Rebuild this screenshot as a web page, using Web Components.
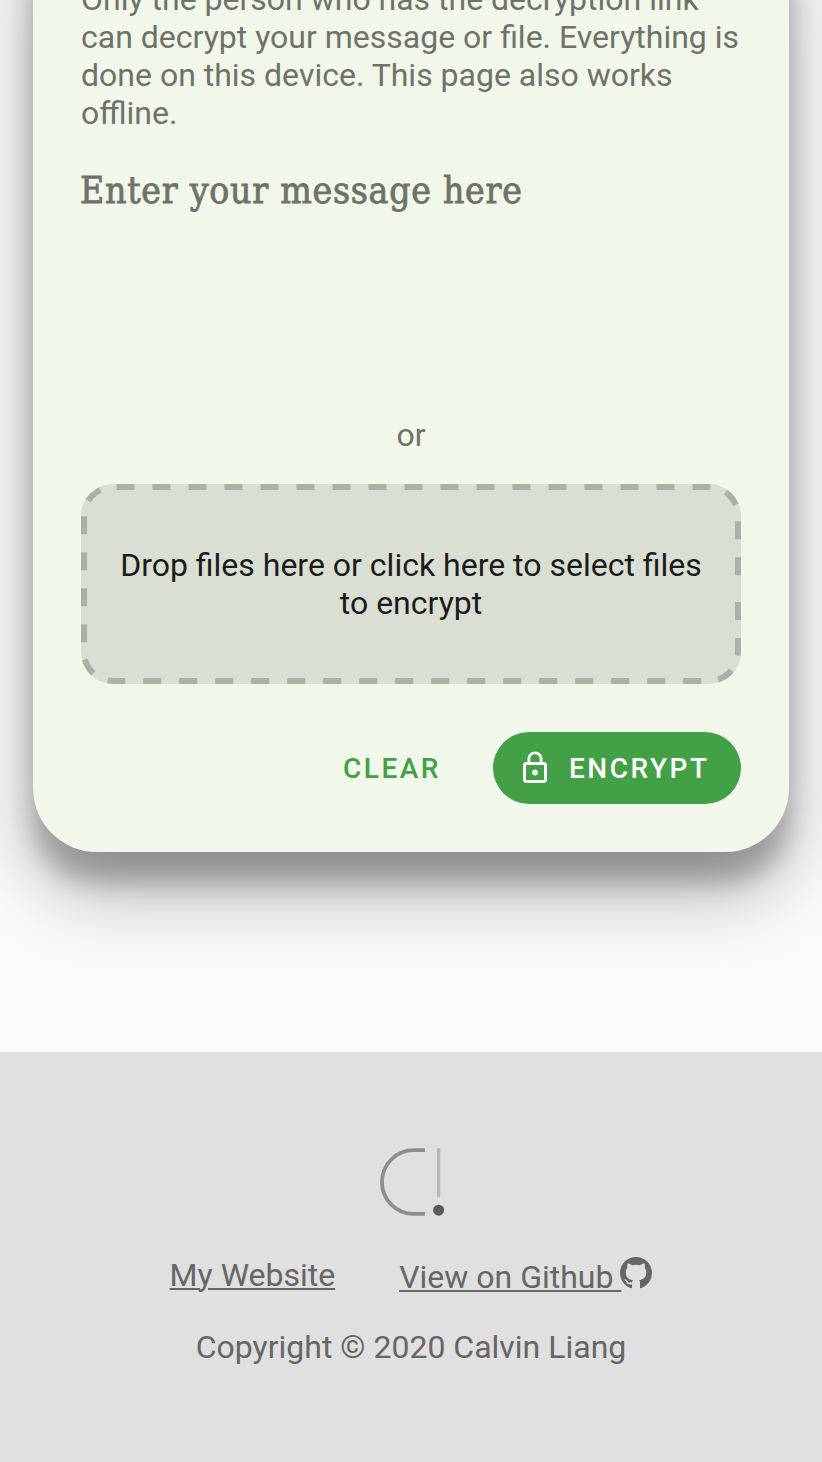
<!DOCTYPE html>
<html lang="en">
<head>
<meta charset="utf-8">
<title>Encrypt a message</title>
<style>
body { margin: 0; background: #fafafa; font: 32px/38px Roboto, "Liberation Sans", sans-serif; }
</style>
</head>
<body>
<encrypt-page></encrypt-page>
<script>
const define = (name, html) => {
  const template = document.createElement('template');
  template.innerHTML = html;
  customElements.define(name, class extends HTMLElement {
    constructor() {
      super();
      this.attachShadow({ mode: 'open' }).append(template.content.cloneNode(true));
    }
  });
};

define('message-card', `
<style>
:host { display: flex; flex-direction: column; box-sizing: border-box; width: 756px; height: 952px;
  margin: -100px auto 0; padding: 80px 48px 48px; border-radius: 64px; background: #f1f8e9; color: #6e7269;
  box-shadow: 0 38px 76px rgba(0,0,0,.3), 0 30px 24px rgba(0,0,0,.22); }
</style>
<slot></slot>`);

define('message-input', `
<style>
:host { display: block; height: 244px; margin-top: 32px; }
div { font: 500 37px/53px "Roboto Slab", "DejaVu Serif Condensed", "DejaVu Serif", serif; letter-spacing: .74px;
  -webkit-text-stroke: .8px; margin-left: -1px; white-space: nowrap; }
</style>
<div><slot></slot></div>`);

define('file-drop', `
<style>
:host { display: grid; height: 200px; border-radius: 32px; background: #d9dfd2; color: #1b1c1a; overflow: hidden; text-align: center; }
svg, p { grid-area: 1 / 1; }
p { margin: 0; padding: 0 32px; align-self: center; }
path { fill: none; stroke: #abb1a7; stroke-width: 12; stroke-dasharray: 18; stroke-dashoffset: 18; }
</style>
<svg width="660" height="200" viewBox="0 0 660 200"><path d="M660 100V168A32 32 0 0 1 628 200H32A32 32 0 0 1 0 168V32A32 32 0 0 1 32 0H628A32 32 0 0 1 660 32Z"/></svg>
<p><slot></slot></p>`);

define('pill-button', `
<style>
:host { display: flex; align-items: center; box-sizing: border-box; height: 72px; padding: 0 16px; border-radius: 36px;
  color: #43a047; font-size: 28px; font-weight: 500; letter-spacing: 2.5px; white-space: nowrap; }
:host([filled]) { width: 248px; padding: 0 0 0 24px; gap: 16px; background: #43a047; color: #fff; }
span { padding-top: 2px; }
</style>
<slot name="icon"></slot><span><slot></slot></span>`);

define('lock-icon', `
<style>:host, svg { display: block; width: 36px; height: 36px; }</style>
<svg viewBox="0 0 24 24" fill="currentColor"><path d="M12 17c1.1 0 2-.9 2-2s-.9-2-2-2-2 .9-2 2 .9 2 2 2zm6-9h-1V6c0-2.76-2.24-5-5-5S7 3.240 7 6v2H6c-1.100 0-2 .9-2 2v10c0 1.100.9 2 2 2h12c1.100 0 2-.9 2-2V10c0-1.100-.9-2-2-2zM8.900 6c0-1.710 1.390-3.100 3.100-3.100s3.100 1.390 3.100 3.100v2H8.900V6zM18 20H6V10h12v10z"/></svg>`);

define('site-logo', `
<style>:host, svg { display: block; width: 64px; height: 68px; } :host { padding-left: 2px; }</style>
<svg viewBox="0 0 64 68"><path d="M45 2.200H33.800A31.850 31.850 0 0 0 33.800 65.900H45" fill="none" stroke="#8e8e8e" stroke-width="3.800"/><path d="M58.600 .3V49" stroke="#b8b8b8" stroke-width="3.300"/><circle cx="58.600" cy="62.200" r="5.500" fill="#5a5a5a"/></svg>`);

define('github-mark', `
<style>:host { display: block; width: 32px; height: 32px; margin: -1.500px 0 0 -1px; } svg { display: block; }</style>
<svg width="32" height="32" viewBox="0 0 16 16" fill="currentColor"><path d="M8 0C3.580 0 0 3.580 0 8c0 3.540 2.290 6.530 5.470 7.590.4.070.55-.17.55-.38 0-.19-.01-.82-.01-1.490-2.010.37-2.530-.49-2.690-.94-.09-.23-.48-.94-.82-1.130-.28-.15-.68-.52-.01-.53.63-.01 1.080.58 1.230.82.72 1.210 1.870.87 2.330.66.07-.52.28-.87.51-1.070-1.780-.2-3.640-.89-3.640-3.950 0-.87.31-1.590.82-2.150-.08-.2-.36-1.020.08-2.120 0 0 .67-.21 2.200.82.64-.18 1.320-.27 2-.27s1.360.09 2 .27c1.530-1.040 2.200-.82 2.200-.82.44 1.100.16 1.920.08 2.120.51.56.82 1.270.82 2.150 0 3.070-1.870 3.750-3.650 3.950.29.25.54.73.54 1.480 0 1.070-.01 1.930-.01 2.200 0 .21.15.46.55.38A8.010 8.010 0 0 0 16 8c0-4.420-3.580-8-8-8z"/></svg>`);

define('footer-link', `
<style>
:host { display: flex; }
a { color: inherit; text-decoration: underline; text-decoration-thickness: 2px; text-underline-offset: 2px; white-space: pre; }
</style>
<a href="#"><slot></slot></a><slot name="icon"></slot>`);

define('site-footer', `
<style>
:host { display: flex; flex-direction: column; align-items: center; box-sizing: border-box; height: 410px; margin-top: 200px; padding-top: 96px; background: #e0e0e0; color: #666; }
nav { display: flex; gap: 64px; margin-top: 40px; height: 72px; }
</style>
<slot name="logo"></slot><nav><slot name="link"></slot></nav><slot></slot>`);

define('encrypt-page', `
<style>
:host { display: flow-root; height: 1462px; overflow: hidden; }
p { margin: 0; }
message-input, .or { flex: none; }
.or { text-align: center; height: 76px; line-height: 54px; }
.actions { display: flex; justify-content: flex-end; gap: 36px; margin-top: 48px; }
.github { margin-top: 2px; }
</style>
<message-card>
  <p>Only the person who has the decryption link can decrypt your message or file. Everything is done on this device. This page also works offline.</p>
  <message-input>Enter your message here</message-input>
  <p class="or">or</p>
  <file-drop>Drop files here or click here to select files to encrypt</file-drop>
  <div class="actions">
    <pill-button>CLEAR</pill-button>
    <pill-button filled><lock-icon slot="icon"></lock-icon>ENCRYPT</pill-button>
  </div>
</message-card>
<site-footer>
  <site-logo slot="logo"></site-logo>
  <footer-link slot="link">My Website</footer-link>
  <footer-link slot="link" class="github">View on Github <github-mark slot="icon"></github-mark></footer-link>
  <span>Copyright © 2020 Calvin Liang</span>
</site-footer>`);
</script>
</body>
</html>
